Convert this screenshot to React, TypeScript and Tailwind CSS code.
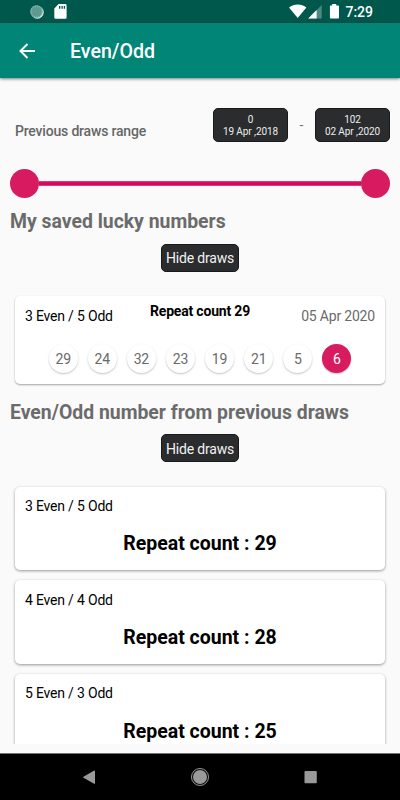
import React from 'react';

// ---------- Types ----------
interface RangeBound {
  index: number;
  date: string;
}

interface DrawGroup {
  label: string;
  count: number;
}

// ---------- Data ----------
const range: RangeBound[] = [
  { index: 0, date: '19 Apr ,2018' },
  { index: 102, date: '02 Apr ,2020' },
];

const luckyNumbers = [29, 24, 32, 23, 19, 21, 5, 6];

const groups: DrawGroup[] = [
  { label: '3 Even / 5 Odd', count: 29 },
  { label: '4 Even / 4 Odd', count: 28 },
  { label: '5 Even / 3 Odd', count: 25 },
];

// ---------- Components ----------
const StatusBar = () => (
  <div className="flex h-[23px] shrink-0 items-center justify-between bg-[#00574b] pl-[30px] pr-[27px]">
    <div className="flex items-center gap-[10px]">
      <svg width="14" height="14" viewBox="0 0 14 14">
        <circle cx="7.3" cy="7.3" r="6.4" fill="#e6f0ee" />
        <circle cx="6.5" cy="6.5" r="6.3" fill="#5f9a91" />
        <circle cx="6.5" cy="6.5" r="5.6" fill="none" stroke="#a8cbc5" strokeWidth="1" strokeDasharray="1 1" />
      </svg>
      <svg width="13" height="15" viewBox="0 0 13 15">
        <path
          d="M4.6 0h6.7a1.3 1.3 0 0 1 1.3 1.3v12.2a1.3 1.3 0 0 1-1.3 1.3H1.6a1.3 1.3 0 0 1-1.3-1.3V4.4z"
          fill="#fff"
        />
        <path d="M5.7 2v2.7M8.1 2v2.7M10.4 2v2.7" stroke="#00574b" strokeWidth="1.3" />
      </svg>
    </div>
    <div className="flex items-center">
      <svg width="50" height="15" viewBox="0 0 50 15">
        <path d="M0 3.6C4.8-.5 12.6-.5 17.4 3.6L8.7 14z" fill="#fff" />
        <path d="M32.7 1v13.4H19.2z" fill="#4d8981" />
        <path d="M27.6 6v8.4h-8.4z" fill="#fff" />
        <path d="M43.2 0h4v1.4h2a.8.8 0 0 1 .8.8v11.6a.8.8 0 0 1-.8.8h-7.5a.8.8 0 0 1-.8-.8V2.2a.8.8 0 0 1 .8-.8h1.5z" fill="#fff" />
      </svg>
      <span className="ml-[6px] mt-px text-[14px] leading-none font-medium text-white">7:29</span>
    </div>
  </div>
);

const AppBar = () => (
  <header className="z-10 flex h-[55px] shrink-0 items-center bg-[#008577] pl-[19px] shadow-[0_1px_3px_rgba(0,0,0,0.5)]">
    <svg width="17" height="16" viewBox="0 0 17 16" fill="none" stroke="#fff" strokeWidth="2">
      <path d="M16 8H2M8.5 1L1.5 8l7 7" />
    </svg>
    <h1 className="ml-[34px] mt-[2px] text-[19.6px] leading-none font-medium text-white">Even/Odd</h1>
  </header>
);

const RangeButton = ({ bound }: { bound: RangeBound }) => (
  <button className="flex h-[34px] w-[75px] flex-col items-center justify-center rounded-[5px] border border-[#17191a] bg-[#2a2c2e] pt-px text-[10px] leading-[11.6px] tracking-[-0.08px] text-[#ececec]">
    <span>{bound.index}</span>
    <span className="whitespace-nowrap">{bound.date}</span>
  </button>
);

const RangeSlider = () => (
  <div className="mx-[10px] mt-[27px] flex h-[29px] items-center">
    <span className="size-[29px] shrink-0 rounded-full bg-[#d81b60]" />
    <span className="h-[5px] flex-1 border-y border-[#dc3f78] bg-[#d8095a]" />
    <span className="size-[29px] shrink-0 rounded-full bg-[#d81b60]" />
  </div>
);

const SectionHeading = ({ children }: { children: React.ReactNode }) => (
  <h2 className="ml-[10px] h-[23px] text-[19.4px] leading-[23px] font-bold text-[#6b6b6b]">{children}</h2>
);

const HideButton = () => (
  <button className="mx-auto mt-[10.5px] block h-7 w-[78px] shrink-0 rounded-[5px] border border-[#17191a] bg-[#2a2c2e] pt-px text-sm leading-none tracking-[-0.19px] whitespace-nowrap text-[#f2f2f2]">
    Hide draws
  </button>
);

const Ball = ({ value, active }: { value: number; active: boolean }) => (
  <span
    className={`flex size-[29px] items-center justify-center rounded-full text-sm leading-none tracking-[-0.19px] shadow-[0_1px_2px_rgba(0,0,0,0.24)] ${
      active ? 'bg-[#d81b60] text-white' : 'bg-white text-[#6a6a6a]'
    }`}
  >
    {value}
  </span>
);

const SavedCard = () => (
  <section className="mx-[15px] mt-6 h-[88px] shrink-0 rounded-[5px] bg-white shadow-[0_1px_2px_rgba(0,0,0,0.35)]">
    <div className="grid grid-cols-3 items-start px-[10px] pt-2 text-sm tracking-[-0.19px] whitespace-nowrap">
      <span className="mt-1 leading-4 text-black">3 Even / 5 Odd</span>
      <span className="text-center leading-[15px] font-bold text-black">Repeat count 29</span>
      <span className="mt-1 text-right leading-4 text-[#6a6a6a]">05 Apr 2020</span>
    </div>
    <div className="mt-[20.5px] flex justify-center gap-[10.1px]">
      {luckyNumbers.map((n, i) => (
        <Ball key={n} value={n} active={i === luckyNumbers.length - 1} />
      ))}
    </div>
  </section>
);

const GroupCard = ({ group }: { group: DrawGroup }) => (
  <section className="h-[83.7px] shrink-0 rounded-[5px] bg-white pt-[11.4px] shadow-[0_1px_3px_rgba(0,0,0,0.4)]">
    <p className="ml-[10px] text-sm leading-4 tracking-[-0.19px] text-black">{group.label}</p>
    <p className="mt-[18.2px] text-center text-[19.5px] leading-[23px] font-bold text-black">Repeat count : {group.count}</p>
  </section>
);

const NavBar = () => (
  <nav className="flex h-[47px] shrink-0 items-center justify-center border-t border-[#6f7474] bg-black">
    <svg width="234" height="20" viewBox="0 0 234 20" fill="#999">
      <path d="M11.2 3.6a.7.7 0 0 1 .8.6v12a.7.7 0 0 1-.9.6L.5 10.7a.6.6 0 0 1 0-1z" />
      <circle cx="117" cy="10" r="8.5" fill="none" stroke="#999" strokeWidth="1" />
      <circle cx="117" cy="10" r="7" />
      <rect x="221.5" y="4" width="12.3" height="12.3" rx="1" />
    </svg>
  </nav>
);

// ---------- Page ----------
export default function App() {
  return (
    <div className="flex h-[800px] w-[400px] flex-col overflow-hidden bg-[#fafafa] font-[Roboto,sans-serif]">
      <StatusBar />
      <AppBar />

      <main className="flex h-[665.5px] shrink-0 flex-col overflow-hidden">
        {/* --- Draw range --- */}
        <div className="mt-[30px] flex items-center pr-[10px] pl-[15px]">
          <span className="mt-3 flex-1 text-sm leading-4 font-medium tracking-[-0.19px] text-[#666]">Previous draws range</span>
          <RangeButton bound={range[0]} />
          <span className="w-[27px] text-center text-sm leading-4 text-[#777]">-</span>
          <RangeButton bound={range[1]} />
        </div>
        <RangeSlider />

        {/* --- Saved numbers --- */}
        <div className="mt-3 flex flex-col">
          <SectionHeading>My saved lucky numbers</SectionHeading>
          <HideButton />
          <SavedCard />
        </div>

        {/* --- Previous draws --- */}
        <div className="mt-[17px] flex flex-col">
          <SectionHeading>Even/Odd number from previous draws</SectionHeading>
          <HideButton />
          <div className="mx-[15px] mt-[24.6px] flex flex-col gap-[10px]">
            {groups.map((g) => (
              <GroupCard key={g.label} group={g} />
            ))}
          </div>
        </div>
      </main>

      <div className="flex-1" />
      <NavBar />
    </div>
  );
}
